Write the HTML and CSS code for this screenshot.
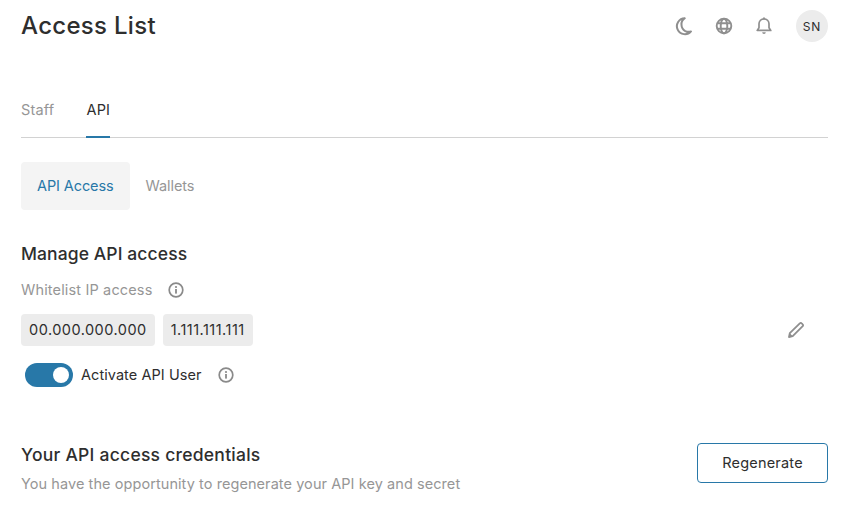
FILE: index.html
```html
<!DOCTYPE html>
<html lang="en">
<head>
    <meta charset="UTF-8">
    <meta name="viewport" content="width=device-width, initial-scale=1.0">
    <title>Access List</title>
    <link rel="stylesheet" href="styles.css">
</head>
<body>
    <div class="topbar">
        <h1 class="page-title">Access List</h1>
        <div class="top-icons">
            <svg class="top-icon" viewBox="0 0 20 20"><path d="M10.800 2.200a8 8 0 1 0 6.200 13.200 7.600 7.600 0 0 1-5.700-.3A7.400 7.400 0 0 1 7.500 9a7.300 7.300 0 0 1 3.300-6.800z" fill="none" stroke="#8f8f8f" stroke-width="2" stroke-linejoin="round"/></svg>
            <svg class="top-icon" viewBox="0 0 20 20"><g fill="none" stroke="#8f8f8f" stroke-width="1.900"><circle cx="10" cy="10" r="7.300"/><ellipse cx="10" cy="10" rx="3.300" ry="7.300"/><path d="M3 7.300h14M3 12.700h14"/></g></svg>
            <svg class="top-icon" viewBox="0 0 20 20"><path d="M10 2.800a5 5 0 0 0-5 5v4l-1.800 2.600h13.600L15 11.800v-4a5 5 0 0 0-5-5z" fill="none" stroke="#8f8f8f" stroke-width="1.700" stroke-linejoin="round"/><path d="M8.200 16.200a1.800 1.800 0 0 0 3.600 0z" fill="#8f8f8f"/><rect x="9.200" y="1.400" width="1.600" height="2" fill="#8f8f8f"/></svg>
            <div class="avatar">SN</div>
        </div>
    </div>

    <div class="tabs">
        <a class="tab">Staff</a>
        <a class="tab active">API</a>
    </div>

    <div class="subtabs">
        <a class="subtab active">API Access</a>
        <a class="subtab">Wallets</a>
    </div>

    <h2 class="section-title">Manage API access</h2>
    <div class="label-row">
        <span class="label">Whitelist IP access</span>
        <svg class="info" viewBox="0 0 16 16"><circle cx="8" cy="8" r="6.800" fill="none" stroke="#8a8a8a" stroke-width="1.700"/><rect x="7.100" y="7" width="1.800" height="4.600" fill="#8a8a8a"/><circle cx="8" cy="5" r="1.100" fill="#8a8a8a"/></svg>
    </div>
    <div class="ip-row">
        <span class="ip">00.000.000.000</span>
        <span class="ip">1.111.111.111</span>
        <svg class="edit" viewBox="0 0 18 18"><path d="M2 16l.8-3.800L12.800 2.300a1.300 1.300 0 0 1 1.900 0l1 1a1.300 1.300 0 0 1 0 1.900L5.700 15.200z" fill="none" stroke="#8f8f8f" stroke-width="1.800" stroke-linejoin="round"/><path d="M2 16l.8-3.800 3 3z" fill="#8f8f8f"/></svg>
    </div>
    <div class="toggle-row">
        <div class="toggle"><div class="knob"></div></div>
        <span class="toggle-label">Activate API User</span>
        <svg class="info" viewBox="0 0 16 16"><circle cx="8" cy="8" r="6.800" fill="none" stroke="#8a8a8a" stroke-width="1.700"/><rect x="7.100" y="7" width="1.800" height="4.600" fill="#8a8a8a"/><circle cx="8" cy="5" r="1.100" fill="#8a8a8a"/></svg>
    </div>

    <div class="credentials">
        <div>
            <h2 class="section-title">Your API access credentials</h2>
            <p class="hint">You have the opportunity to regenerate your API key and secret</p>
        </div>
        <button class="regen">Regenerate</button>
    </div>
</body>
</html>
```

FILE: styles.css
```css
body {
    margin: 0;
    padding: 0 23px 0 21px;
    background: #fff;
    color: #2e2e2e;
    font-family: 'Inter', 'Roboto', sans-serif;
    font-size: 14.5px;
    height: 514px;
    box-sizing: border-box;
    overflow: hidden;
}
.topbar {
    display: flex;
    justify-content: space-between;
    align-items: center;
    padding-top: 10px;
    height: 32px;
}
.page-title {
    margin: 0;
    padding-bottom: 2px;
    font-size: 24px;
    font-weight: 500;
    letter-spacing: 0.3px;
    color: #2e2e2e;
}
.top-icons {
    display: flex;
    align-items: center;
    gap: 20px;
}
.top-icon {
    width: 20px;
    height: 20px;
}
.avatar {
    width: 32px;
    height: 32px;
    margin-left: 2px;
    border-radius: 50%;
    background: #ececec;
    display: flex;
    align-items: center;
    justify-content: center;
    font-size: 12px;
    letter-spacing: 1px;
}
.tabs {
    display: flex;
    gap: 32px;
    margin-top: 48px;
    border-bottom: 1px solid #d2d2d2;
}
.tab {
    padding: 10px 0 16px;
    line-height: 20px;
    margin-bottom: -1px;
    letter-spacing: 0.2px;
    color: #969696;
    border-bottom: 2px solid transparent;
}
.tab.active {
    color: #2e2e2e;
    border-bottom-color: #2878a8;
}
.subtabs {
    display: flex;
    margin-top: 24px;
}
.subtab {
    padding: 0 16px;
    height: 48px;
    line-height: 48px;
    letter-spacing: -0.1px;
    color: #969696;
    border-radius: 4px;
}
.subtab.active {
    background: #f4f4f4;
    color: #2878a8;
}
.section-title {
    margin: 0;
    font-size: 17.5px;
    font-weight: 500;
    line-height: 24px;
    letter-spacing: 0.1px;
    color: #2e2e2e;
}
.subtabs + .section-title {
    margin-top: 32px;
}
.label-row {
    display: flex;
    align-items: center;
    gap: 16px;
    margin-top: 12px;
    height: 24px;
}
.label {
    padding-bottom: 2px;
    letter-spacing: 0.15px;
    color: #969696;
}
.info {
    width: 16px;
    height: 16px;
}
.ip-row {
    display: flex;
    align-items: center;
    gap: 8px;
    margin-top: 12px;
    padding-right: 23px;
}
.ip {
    background: #ececec;
    border-radius: 4px;
    padding: 0 8px;
    height: 32px;
    line-height: 32px;
    letter-spacing: 0.48px;
}
.edit {
    margin-left: auto;
    width: 18px;
    height: 18px;
}
.toggle-row {
    display: flex;
    align-items: center;
    margin-top: 17px;
    padding-left: 4px;
}
.toggle {
    width: 48px;
    height: 24px;
    border-radius: 12px;
    background: #2878a8;
    display: flex;
    align-items: center;
    justify-content: flex-end;
    padding-right: 4px;
    box-sizing: border-box;
}
.knob {
    width: 16px;
    height: 16px;
    border-radius: 50%;
    background: #fff;
}
.toggle-label {
    margin: 0 16px 0 8px;
    padding-bottom: 2px;
    letter-spacing: 0.06px;
}
.credentials {
    display: flex;
    justify-content: space-between;
    align-items: flex-start;
    margin-top: 56px;
}
.credentials .section-title {
    letter-spacing: 0.25px;
}
.hint {
    margin: 7px 0 0;
    letter-spacing: 0.07px;
    color: #969696;
    line-height: 20px;
}
.regen {
    width: 131px;
    height: 40px;
    padding-bottom: 3px;
    background: #fff;
    border: 1px solid #2878a8;
    border-radius: 4px;
    color: #2e2e2e;
    font-family: inherit;
    font-size: 14.5px;
    letter-spacing: 0.2px;
}
```
